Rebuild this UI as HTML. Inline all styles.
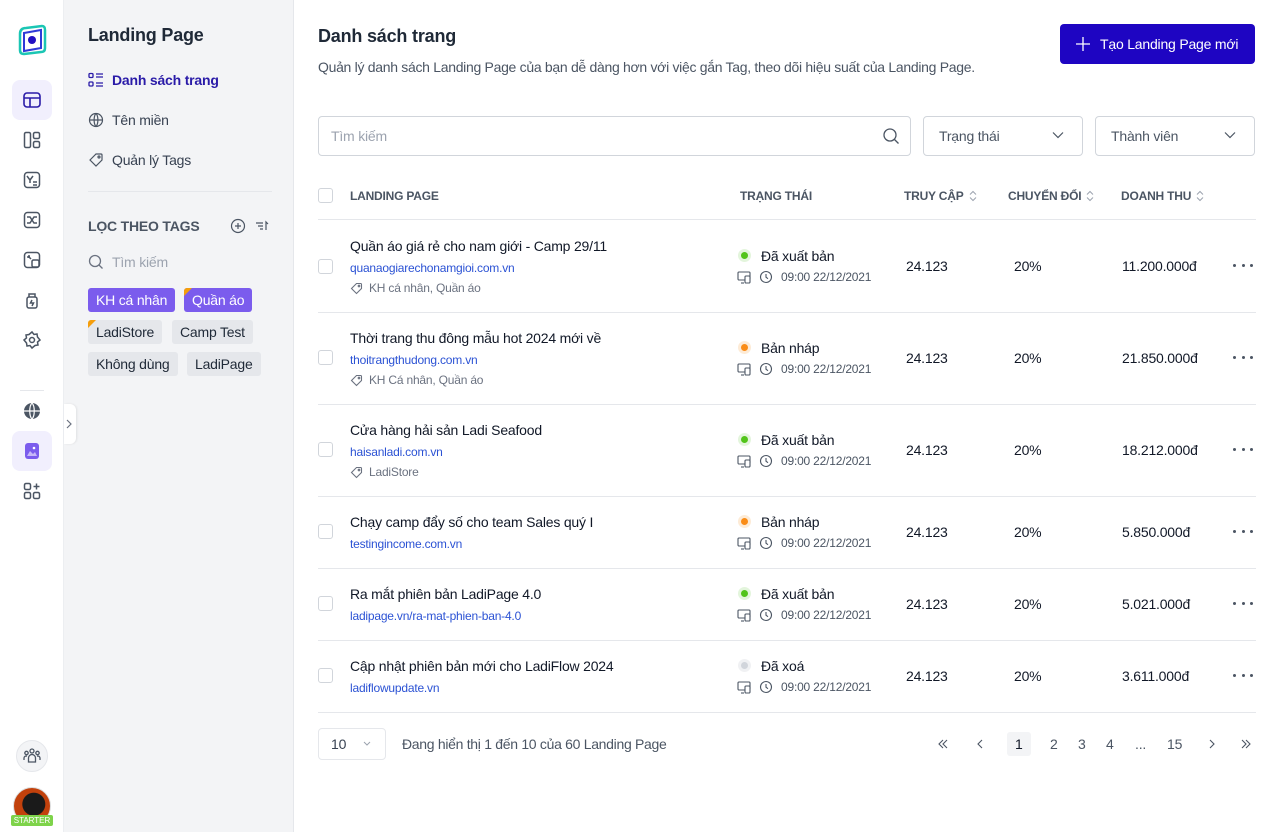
<!DOCTYPE html>
<html><head><meta charset="utf-8"><style>
*{box-sizing:border-box;margin:0;padding:0}
body{width:1280px;height:832px;overflow:hidden;font-family:"Liberation Sans","Noto Sans CJK SC",sans-serif;background:#fff;position:relative;color:#1f2937;letter-spacing:-0.2px}
.abs{position:absolute}
.rail{left:0;top:0;width:64px;height:832px;background:#fff;border-right:1px solid #eceef1}
.sub{left:64px;top:0;width:230px;height:832px;background:#f3f4f6;border-right:1px solid #e5e7eb}
.ic{position:absolute;left:22px;width:20px;height:20px}
svg{display:block}
.nav{position:absolute;left:88px;font-size:14px;color:#374151;display:flex;align-items:center;gap:8px}
.tag{position:absolute;height:24px;line-height:24px;padding:0 8px;font-size:14px;border-radius:3px;background:#e5e7eb;color:#1f2937;overflow:hidden}
.tag.p{background:#7b5ced;color:#fff}
.tag .c{position:absolute;left:0;top:0;border-top:8px solid #f59e0b;border-right:8px solid transparent}
.th{position:absolute;top:189px;font-size:12px;color:#4b5563;font-weight:bold;display:flex;align-items:center;gap:5px}
.cb{position:absolute;left:318px;width:15px;height:15px;border:1px solid #d1d5db;border-radius:3px;background:#fff}
.line{position:absolute;left:318px;width:938px;height:1px;background:#e5e7eb}
.t1{position:absolute;left:350px;font-size:14px;color:#111827}
.t2{position:absolute;left:350px;font-size:12px;color:#2b52d4}
.t3{position:absolute;left:350px;font-size:12px;color:#6b7280;display:flex;align-items:center;gap:6px}
.dot{position:absolute;left:738px;width:13px;height:13px;border-radius:50%;border:3px solid #e3f5dc;background:#52c41a}
.st{position:absolute;left:761px;font-size:14px;color:#111827}
.tm{position:absolute;left:737px;font-size:12px;color:#4b5563;display:flex;align-items:center;gap:8px}
.n{position:absolute;font-size:14px;color:#111827}
.more{position:absolute;left:1233px;width:20px;height:4px;display:flex;justify-content:space-between}
.more i{width:3px;height:3px;border-radius:50%;background:#4b5563}
.sel{position:absolute;top:116px;height:40px;border:1px solid #d1d5db;border-radius:4px;font-size:14px;color:#4b5563;padding:0 15px;line-height:38px}
.pg{position:absolute;top:736px;font-size:14px;color:#4b5563}
</style></head><body>

<div class="abs rail">
 <svg class="abs" style="left:16px;top:24px" width="32" height="32" viewBox="0 0 32 32"><path d="M4 10 Q4 4 10 4 L26 2 Q29 2 29 6 L29 24 Q29 28 25 28 L8 30 Q4 30 4 26Z" fill="none" stroke="#1bc6b4" stroke-width="2.5"/><path d="M8 9 L25 6 L25 24 L8 27Z" fill="#fff" stroke="#2f3ad8" stroke-width="2"/><circle cx="16" cy="16" r="4" fill="#2210c2"/></svg>
 <div class="abs" style="left:12px;top:80px;width:40px;height:40px;border-radius:8px;background:#f1effd"></div>
 <svg class="ic" style="top:90px" viewBox="0 0 20 20" fill="none" stroke="#2a1ba8" stroke-width="1.6"><rect x="2" y="3" width="16" height="14" rx="3"/><path d="M2 8h16M8 8v9"/></svg>
 <svg class="ic" style="top:130px" viewBox="0 0 20 20" fill="none" stroke="#4b5563" stroke-width="1.5"><rect x="2.5" y="2.5" width="6" height="15" rx="1.5"/><rect x="11.5" y="2.5" width="6" height="6" rx="1.5"/><rect x="11.5" y="11.5" width="6" height="6" rx="1.5"/></svg>
 <svg class="ic" style="top:170px" viewBox="0 0 20 20" fill="none" stroke="#4b5563" stroke-width="1.5"><rect x="2.5" y="2.5" width="15" height="15" rx="3"/><path d="M5 6l3 4v3M11 6l-3 4M11 12h4M11 15h4"/></svg>
 <svg class="ic" style="top:210px" viewBox="0 0 20 20" fill="none" stroke="#4b5563" stroke-width="1.5"><rect x="2.5" y="2.5" width="15" height="15" rx="3"/><path d="M5 7h3l4 6h3M5 13h3l4-6h3"/></svg>
 <svg class="ic" style="top:250px" viewBox="0 0 20 20" fill="none" stroke="#4b5563" stroke-width="1.5"><rect x="2.5" y="2.5" width="15" height="15" rx="3"/><rect x="10" y="10" width="7" height="7" rx="1.5"/><path d="M6 6l3 3M6 6h2M6 6v2"/></svg>
 <svg class="ic" style="top:290px" viewBox="0 0 20 20" fill="none" stroke="#4b5563" stroke-width="1.5"><rect x="5" y="7" width="10" height="11" rx="2"/><path d="M7 7V4h6v3M10 10l-1.5 3h3L10 16"/></svg>
 <svg class="ic" style="top:330px" viewBox="0 0 20 20" fill="none" stroke="#4b5563" stroke-width="1.5"><circle cx="10" cy="10" r="2.5"/><path d="M10 2l2 2.5 3-.5 .5 3L18 10l-2.5 2 .5 3-3 .5L10 18l-2-2.5-3 .5-.5-3L2 10l2.5-2-.5-3 3-.5Z"/></svg>
 <div class="abs" style="left:20px;top:390px;width:24px;height:1px;background:#e5e7eb"></div>
 <svg class="ic" style="top:401px" viewBox="0 0 20 20"><circle cx="10" cy="10" r="8" fill="#4b5563"/><path d="M2 10h16M10 2c-3 3-3 13 0 16M10 2c3 3 3 13 0 16" stroke="#fff" stroke-width="1.2" fill="none"/></svg>
 <div class="abs" style="left:12px;top:431px;width:40px;height:40px;border-radius:8px;background:#f1effd"></div>
 <svg class="ic" style="top:441px" viewBox="0 0 20 20"><rect x="3" y="2" width="14" height="16" rx="3" fill="#7b5ced"/><path d="M5 15l3-5 3 3 2-2 2 4Z" fill="#c7b8f8"/><circle cx="12" cy="7" r="1.3" fill="#fff"/></svg>
 <svg class="ic" style="top:481px" viewBox="0 0 20 20" fill="none" stroke="#4b5563" stroke-width="1.5"><rect x="2.5" y="2.5" width="6" height="6" rx="1.5"/><rect x="2.5" y="11.5" width="6" height="6" rx="1.5"/><rect x="11.5" y="11.5" width="6" height="6" rx="1.5"/><path d="M14.5 2.5v6M11.5 5.5h6"/></svg>
 <div class="abs" style="left:16px;top:740px;width:32px;height:32px;border-radius:50%;background:#f3f4f6;border:1px solid #e5e7eb"></div>
 <svg class="abs" style="left:22px;top:746px" width="20" height="20" viewBox="0 0 20 20" fill="none" stroke="#4b5563" stroke-width="1.3"><circle cx="10" cy="5" r="2"/><circle cx="4.5" cy="7" r="1.7"/><circle cx="15.5" cy="7" r="1.7"/><path d="M6.5 16v-4a3.5 3.5 0 017 0v4ZM2 14v-2a2 2 0 013-1.7M18 14v-2a2 2 0 00-3-1.7"/></svg>
 <div class="abs" style="left:13px;top:787px;width:38px;height:38px;border-radius:50%;background:radial-gradient(circle at 55% 45%,#1a1a1a 40%,#c2410c 42%);border:1px solid #ddd"></div>
 <div class="abs" style="left:11px;top:815px;width:42px;height:11px;background:#7ed34a;color:#fff;font-size:8px;text-align:center;line-height:11px;border-radius:2px;letter-spacing:0">STARTER</div>
</div>

<div class="abs sub">
 <div class="abs" style="left:24px;top:25px;font-size:18px;font-weight:bold;color:#1f2937">Landing Page</div>
 <div class="abs" style="left:24px;top:191px;width:184px;height:1px;background:#e5e7eb"></div>
 <div class="abs" style="left:24px;top:218px;font-size:14px;font-weight:bold;color:#4b5563">LỌC THEO TAGS</div>
 <svg class="abs" style="left:166px;top:218px" width="16" height="16" viewBox="0 0 16 16" fill="none" stroke="#4b5563" stroke-width="1.2"><circle cx="8" cy="8" r="6.5"/><path d="M8 5v6M5 8h6"/></svg>
 <svg class="abs" style="left:190px;top:218px" width="16" height="16" viewBox="0 0 16 16" fill="none" stroke="#4b5563" stroke-width="1.2"><path d="M2 5h7M4 8h5M6 11h3M12 12V4l2 2"/></svg>
 <svg class="abs" style="left:24px;top:254px" width="16" height="16" viewBox="0 0 16 16" fill="none" stroke="#6b7280" stroke-width="1.3"><circle cx="7" cy="7" r="5.5"/><path d="M11 11l3.5 3.5"/></svg>
 <div class="abs" style="left:48px;top:254px;font-size:14px;color:#9ca3af">Tìm kiếm</div>
 <div class="tag p" style="left:24px;top:288px">KH cá nhân</div>
 <div class="tag p" style="left:120px;top:288px"><i class="c"></i>Quần áo</div>
 <div class="tag" style="left:24px;top:320px"><i class="c"></i>LadiStore</div>
 <div class="tag" style="left:108px;top:320px">Camp Test</div>
 <div class="tag" style="left:24px;top:352px">Không dùng</div>
 <div class="tag" style="left:123px;top:352px">LadiPage</div>
</div>
<div class="nav" style="top:72px;color:#2a1ba8;font-weight:bold"><svg width="16" height="16" viewBox="0 0 16 16" fill="none" stroke="#2a1ba8" stroke-width="1.3"><rect x="1" y="1.5" width="4" height="4" rx="1"/><rect x="1" y="10" width="4" height="4" rx="1"/><path d="M8 2h7M8 5h7M8 11h7M8 14h7"/></svg>Danh sách trang</div>
<div class="nav" style="top:112px"><svg width="16" height="16" viewBox="0 0 16 16" fill="none" stroke="#4b5563" stroke-width="1.2"><circle cx="8" cy="8" r="6.5"/><path d="M1.5 8h13M8 1.5c-2.5 2.5-2.5 10.5 0 13M8 1.5c2.5 2.5 2.5 10.5 0 13"/></svg>Tên miền</div>
<div class="nav" style="top:152px"><svg width="16" height="16" viewBox="0 0 16 16" fill="none" stroke="#4b5563" stroke-width="1.2"><path d="M2 8l6-6h5a1 1 0 011 1v5l-6 6Z"/><circle cx="11" cy="5" r="1"/></svg>Quản lý Tags</div>
<div class="abs" style="left:64px;top:404px;width:12px;height:40px;background:#fff;border-radius:0 6px 6px 0;box-shadow:1px 0 2px rgba(0,0,0,.08)"></div>
<svg class="abs" style="left:65px;top:418px" width="8" height="12" viewBox="0 0 8 12" fill="none" stroke="#6b7280" stroke-width="1.2"><path d="M2 2l4 4-4 4"/></svg>

<div class="abs" style="left:318px;top:26px;font-size:18px;font-weight:bold;color:#1f2937">Danh sách trang</div>
<div class="abs" style="left:318px;top:59px;font-size:14px;color:#4b5563;letter-spacing:-0.3px">Quản lý danh sách Landing Page của bạn dễ dàng hơn với việc gắn Tag, theo dõi hiệu suất của Landing Page.</div>
<div class="abs" style="left:1060px;top:24px;width:195px;height:40px;background:#1e05c2;border-radius:4px;color:#fff;font-size:14px;line-height:40px;padding-left:40px">Tạo Landing Page mới</div>
<svg class="abs" style="left:1076px;top:37px" width="14" height="14" viewBox="0 0 14 14" stroke="#fff" stroke-width="1.3"><path d="M7 0v14M0 7h14"/></svg>

<div class="sel" style="left:318px;width:593px;color:#9ca3af;padding-left:12px">Tìm kiếm</div>
<svg class="abs" style="left:882px;top:127px" width="18" height="18" viewBox="0 0 18 18" fill="none" stroke="#4b5563" stroke-width="1.3"><circle cx="8" cy="8" r="6"/><path d="M12.5 12.5l4 4"/></svg>
<div class="sel" style="left:923px;width:160px">Trạng thái</div>
<div class="sel" style="left:1095px;width:160px">Thành viên</div>
<svg class="abs" style="left:1052px;top:131px" width="12" height="8" viewBox="0 0 12 8" fill="none" stroke="#4b5563" stroke-width="1.2"><path d="M1 1.5l5 5 5-5"/></svg>
<svg class="abs" style="left:1224px;top:131px" width="12" height="8" viewBox="0 0 12 8" fill="none" stroke="#4b5563" stroke-width="1.2"><path d="M1 1.5l5 5 5-5"/></svg>

<div class="cb" style="top:188px"></div>
<div class="th" style="left:350px">LANDING PAGE</div>
<div class="th" style="left:740px">TRẠNG THÁI</div>
<div class="th" style="left:904px">TRUY CẬP <svg width="8" height="12" viewBox="0 0 8 12" fill="none" stroke="#9ca3af" stroke-width="1"><path d="M1 4.5l3-3 3 3M1 7.5l3 3 3-3"/></svg></div>
<div class="th" style="left:1008px">CHUYỂN ĐỔI <svg width="8" height="12" viewBox="0 0 8 12" fill="none" stroke="#9ca3af" stroke-width="1"><path d="M1 4.5l3-3 3 3M1 7.5l3 3 3-3"/></svg></div>
<div class="th" style="left:1121px">DOANH THU <svg width="8" height="12" viewBox="0 0 8 12" fill="none" stroke="#9ca3af" stroke-width="1"><path d="M1 4.5l3-3 3 3M1 7.5l3 3 3-3"/></svg></div>
<div class="line" style="top:219px"></div>

<svg width="0" height="0" style="position:absolute"><defs>
<g id="tg" fill="none" stroke="#6b7280" stroke-width="1.1"><path d="M1.5 6.5l5-5h4a1 1 0 011 1v4l-5 5Z"/><circle cx="9" cy="4" r=".8"/></g>
<g id="dv" fill="none" stroke="#4b5563" stroke-width="1.1"><rect x="1" y="2" width="12" height="8" rx="1"/><rect x="8" y="6" width="5" height="7" rx="1" fill="#fff"/><path d="M4 13h3"/></g>
<g id="ck" fill="none" stroke="#4b5563" stroke-width="1.1"><circle cx="7" cy="7" r="5.5"/><path d="M7 4v3.2l2 1.5"/></g>
</defs></svg>

<!-- row 1 -->
<div class="cb" style="top:259px"></div>
<div class="t1" style="top:238px">Quần áo giá rẻ cho nam giới - Camp 29/11</div>
<div class="t2" style="top:261px">quanaogiarechonamgioi.com.vn</div>
<div class="t3" style="top:281px"><svg width="13" height="13"><use href="#tg"/></svg>KH cá nhân, Quần áo</div>
<div class="dot" style="top:249px"></div><div class="st" style="top:248px">Đã xuất bản</div>
<div class="tm" style="top:270px"><svg width="14" height="14"><use href="#dv"/></svg><svg width="14" height="14"><use href="#ck"/></svg>09:00 22/12/2021</div>
<div class="n" style="left:906px;top:258px">24.123</div><div class="n" style="left:1014px;top:258px">20%</div><div class="n" style="left:1122px;top:258px">11.200.000đ</div><div class="more" style="top:264px"><i></i><i></i><i></i></div>
<div class="line" style="top:312px"></div>

<div class="cb" style="top:350px"></div>
<div class="t1" style="top:330px">Thời trang thu đông mẫu hot 2024 mới về</div>
<div class="t2" style="top:353px">thoitrangthudong.com.vn</div>
<div class="t3" style="top:373px"><svg width="13" height="13"><use href="#tg"/></svg>KH Cá nhân, Quần áo</div>
<div class="dot" style="top:341px;background:#fa8c16;border-color:#fdebd6"></div><div class="st" style="top:340px">Bản nháp</div>
<div class="tm" style="top:362px"><svg width="14" height="14"><use href="#dv"/></svg><svg width="14" height="14"><use href="#ck"/></svg>09:00 22/12/2021</div>
<div class="n" style="left:906px;top:350px">24.123</div><div class="n" style="left:1014px;top:350px">20%</div><div class="n" style="left:1122px;top:350px">21.850.000đ</div><div class="more" style="top:356px"><i></i><i></i><i></i></div>
<div class="line" style="top:404px"></div>

<div class="cb" style="top:442px"></div>
<div class="t1" style="top:422px">Cửa hàng hải sản Ladi Seafood</div>
<div class="t2" style="top:445px">haisanladi.com.vn</div>
<div class="t3" style="top:465px"><svg width="13" height="13"><use href="#tg"/></svg>LadiStore</div>
<div class="dot" style="top:433px"></div><div class="st" style="top:432px">Đã xuất bản</div>
<div class="tm" style="top:454px"><svg width="14" height="14"><use href="#dv"/></svg><svg width="14" height="14"><use href="#ck"/></svg>09:00 22/12/2021</div>
<div class="n" style="left:906px;top:442px">24.123</div><div class="n" style="left:1014px;top:442px">20%</div><div class="n" style="left:1122px;top:442px">18.212.000đ</div><div class="more" style="top:448px"><i></i><i></i><i></i></div>
<div class="line" style="top:496px"></div>

<div class="cb" style="top:524px"></div>
<div class="t1" style="top:514px">Chạy camp đẩy số cho team Sales quý I</div>
<div class="t2" style="top:537px">testingincome.com.vn</div>
<div class="dot" style="top:515px;background:#fa8c16;border-color:#fdebd6"></div><div class="st" style="top:514px">Bản nháp</div>
<div class="tm" style="top:536px"><svg width="14" height="14"><use href="#dv"/></svg><svg width="14" height="14"><use href="#ck"/></svg>09:00 22/12/2021</div>
<div class="n" style="left:906px;top:524px">24.123</div><div class="n" style="left:1014px;top:524px">20%</div><div class="n" style="left:1122px;top:524px">5.850.000đ</div><div class="more" style="top:530px"><i></i><i></i><i></i></div>
<div class="line" style="top:568px"></div>

<div class="cb" style="top:596px"></div>
<div class="t1" style="top:586px">Ra mắt phiên bản LadiPage 4.0</div>
<div class="t2" style="top:609px">ladipage.vn/ra-mat-phien-ban-4.0</div>
<div class="dot" style="top:587px"></div><div class="st" style="top:586px">Đã xuất bản</div>
<div class="tm" style="top:608px"><svg width="14" height="14"><use href="#dv"/></svg><svg width="14" height="14"><use href="#ck"/></svg>09:00 22/12/2021</div>
<div class="n" style="left:906px;top:596px">24.123</div><div class="n" style="left:1014px;top:596px">20%</div><div class="n" style="left:1122px;top:596px">5.021.000đ</div><div class="more" style="top:602px"><i></i><i></i><i></i></div>
<div class="line" style="top:640px"></div>

<div class="cb" style="top:668px"></div>
<div class="t1" style="top:658px">Cập nhật phiên bản mới cho LadiFlow 2024</div>
<div class="t2" style="top:681px">ladiflowupdate.vn</div>
<div class="dot" style="top:659px;background:#d1d5db;border-color:#f0f1f3"></div><div class="st" style="top:658px">Đã xoá</div>
<div class="tm" style="top:680px"><svg width="14" height="14"><use href="#dv"/></svg><svg width="14" height="14"><use href="#ck"/></svg>09:00 22/12/2021</div>
<div class="n" style="left:906px;top:668px">24.123</div><div class="n" style="left:1014px;top:668px">20%</div><div class="n" style="left:1122px;top:668px">3.611.000đ</div><div class="more" style="top:674px"><i></i><i></i><i></i></div>
<div class="line" style="top:712px"></div>

<div class="abs" style="left:318px;top:728px;width:68px;height:32px;border:1px solid #e5e7eb;border-radius:4px;font-size:14px;line-height:30px;padding-left:12px;color:#374151">10</div>
<svg class="abs" style="left:363px;top:741px" width="8" height="6" viewBox="0 0 8 6" fill="none" stroke="#9ca3af" stroke-width="1"><path d="M1 1l3 3 3-3"/></svg>
<div class="abs" style="left:402px;top:736px;font-size:14px;color:#4b5563;letter-spacing:-0.3px">Đang hiển thị 1 đến 10 của 60 Landing Page</div>
<svg class="abs" style="left:937px;top:738px" width="12" height="12" viewBox="0 0 12 12" fill="none" stroke="#4b5563" stroke-width="1.1"><path d="M6 2L2 6l4 4M10 2L6 6l4 4"/></svg>
<svg class="abs" style="left:975px;top:738px" width="12" height="12" viewBox="0 0 12 12" fill="none" stroke="#4b5563" stroke-width="1.1"><path d="M7 2L3 6l4 4"/></svg>
<div class="abs" style="left:1007px;top:732px;width:24px;height:24px;background:#f3f4f6;border-radius:3px"></div>
<div class="pg" style="left:1015px;color:#111827">1</div>
<div class="pg" style="left:1050px">2</div><div class="pg" style="left:1078px">3</div><div class="pg" style="left:1106px">4</div><div class="pg" style="left:1135px">...</div><div class="pg" style="left:1167px">15</div>
<svg class="abs" style="left:1205px;top:738px" width="12" height="12" viewBox="0 0 12 12" fill="none" stroke="#4b5563" stroke-width="1.1"><path d="M5 2l4 4-4 4"/></svg>
<svg class="abs" style="left:1240px;top:738px" width="12" height="12" viewBox="0 0 12 12" fill="none" stroke="#4b5563" stroke-width="1.1"><path d="M2 2l4 4-4 4M6 2l4 4-4 4"/></svg>
</body></html>
